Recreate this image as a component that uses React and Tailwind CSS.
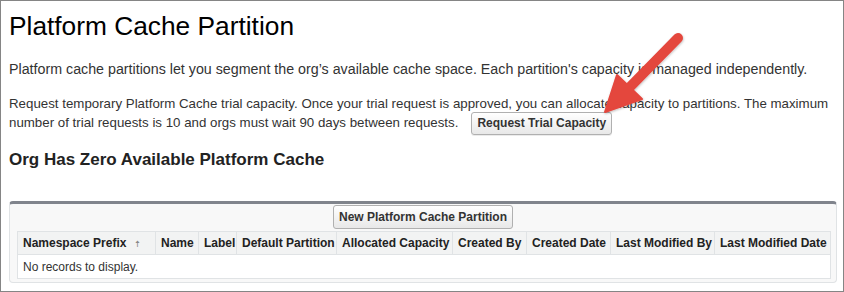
import React from 'react'

const columns = [
    { label: 'Namespace Prefix', w: 'w-[138px]', sort: true },
    { label: 'Name', w: 'w-[43px]' },
    { label: 'Label', w: 'w-[38px]' },
    { label: 'Default Partition', w: 'w-[100px]' },
    { label: 'Allocated Capacity', w: 'w-[116px]' },
    { label: 'Created By', w: 'w-[74px]' },
    { label: 'Created Date', w: 'w-[84px]' },
    { label: 'Last Modified By', w: 'w-[104px]' },
    { label: 'Last Modified Date', w: 'w-[116px]' },
]

function Arrow() {
    return (
        <svg className="absolute left-0 top-0 pointer-events-none" width="844" height="292" viewBox="0 0 844 292">
            <defs>
                <filter id="sh" x="-20%" y="-20%" width="140%" height="140%">
                    <feDropShadow dx="0.5" dy="1" stdDeviation="1" floodColor="#000" floodOpacity="0.25" />
                </filter>
            </defs>
            <g filter="url(#sh)" fill="#e4463d">
                <line x1="677" y1="37" x2="626" y2="89" stroke="#e4463d" strokeWidth="10" strokeLinecap="round" />
                <polygon points="604,111 616,74 641,98" strokeLinejoin="round" stroke="#e4463d" strokeWidth="2" />
            </g>
        </svg>
    )
}

export default function App() {
    return (
        <div className="relative w-[844px] h-[292px] bg-white border border-[#858585] overflow-hidden font-['Liberation_Sans',Arial,sans-serif]">
            <div className="pl-[8px] pr-[6px]">
                <h1 className="text-[26.3px] leading-[32px] pt-[9px] text-black">Platform Cache Partition</h1>

                <p className="mt-[18px] text-[14.25px] leading-[19px] text-[#333]">
                    Platform cache partitions let you segment the org’s available cache space. Each partition's capacity is managed independently.
                </p>

                <p className="mt-[15px] text-[13.3px] leading-[19px] text-[#333]">
                    Request temporary Platform Cache trial capacity. Once your trial request is approved, you can allocate capacity to partitions. The maximum number of trial requests is 10 and orgs must wait 90 days between requests.
                    <button className="ml-[13px] -my-[3px] h-[23px] px-[5px] align-middle text-[12px] font-bold text-[#333] border border-[#b0b0b0] rounded-[3px] bg-gradient-to-b from-white to-[#e8e8e8] shadow-[0_1px_0_rgba(0,0,0,0.08)]">
                        Request Trial Capacity
                    </button>
                </p>

                <h2 className="mt-[17px] text-[17px] leading-[22px] font-bold text-[#222]">Org Has Zero Available Platform Cache</h2>

                <div className="mt-[30px] w-[828px] h-[82px] bg-[#f8f8f8] border border-[#e0e3e5] border-t-[3px] border-t-[#80848c] rounded-[4px] px-[7px]">
                    <div className="flex justify-center pt-[1px]">
                        <button className="h-[24px] px-[5px] text-[12px] font-bold text-[#333] border border-[#b0b0b0] rounded-[3px] bg-gradient-to-b from-white to-[#e8e8e8]">
                            New Platform Cache Partition
                        </button>
                    </div>
                    <table className="mt-[2px] w-[813px] border-collapse text-[12px] table-fixed">
                        <thead>
                            <tr className="bg-[#f2f3f3] h-[23px]">
                                {columns.map((c) => (
                                    <th
                                        key={c.label}
                                        className={`${c.w} px-[5px] text-left font-bold text-[#222] border border-[#e0e3e5] whitespace-nowrap`}
                                    >
                                        {c.label}
                                        {c.sort && <span className="ml-[9px] text-[9px] text-[#888] font-normal">🠅</span>}
                                    </th>
                                ))}
                            </tr>
                        </thead>
                        <tbody>
                            <tr className="bg-white h-[24px]">
                                <td colSpan={9} className="px-[5px] text-[#333] border border-[#e0e3e5]">
                                    No records to display.
                                </td>
                            </tr>
                        </tbody>
                    </table>
                </div>
            </div>
            <Arrow />
        </div>
    )
}
